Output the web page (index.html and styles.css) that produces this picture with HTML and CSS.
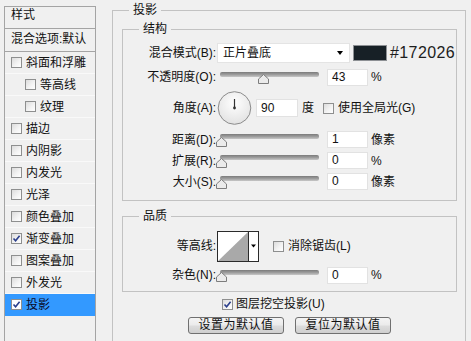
FILE: index.html
```html
<!DOCTYPE html>
<html lang="zh">
<head>
<meta charset="utf-8">
<title>图层样式 - 投影</title>
<link rel="stylesheet" href="styles.css">
</head>
<body>
<div class="dialog">
  <aside class="style-list">
    <div class="list-head">样式</div>
    <div class="list-head second">混合选项:默认</div>
    <div class="item"><span class="cb"></span>斜面和浮雕</div>
    <div class="item sub"><span class="cb"></span>等高线</div>
    <div class="item sub"><span class="cb"></span>纹理</div>
    <div class="item"><span class="cb"></span>描边</div>
    <div class="item"><span class="cb"></span>内阴影</div>
    <div class="item"><span class="cb"></span>内发光</div>
    <div class="item"><span class="cb"></span>光泽</div>
    <div class="item"><span class="cb"></span>颜色叠加</div>
    <div class="item"><span class="cb"><svg width="9" height="9" viewBox="0 0 9 9"><path d="M1.5 4.5 L3.6 6.8 L7.6 1.8" fill="none" stroke="#2b3f8c" stroke-width="1.6"/></svg></span>渐变叠加</div>
    <div class="item"><span class="cb"></span>图案叠加</div>
    <div class="item"><span class="cb"></span>外发光</div>
    <div class="item active"><span class="cb"><svg width="9" height="9" viewBox="0 0 9 9"><path d="M1.5 4.5 L3.6 6.8 L7.6 1.8" fill="none" stroke="#2b3f8c" stroke-width="1.6"/></svg></span>投影</div>
  </aside>

  <fieldset class="group outer">
    <legend>投影</legend>

    <fieldset class="group structure">
      <legend>结构</legend>
      <div class="rows">
        <div class="row">
          <span class="lbl">混合模式(B):</span>
          <div class="select"><span>正片叠底</span><span class="caret"></span></div>
          <span class="swatch"></span>
          <span class="hex">#172026</span>
        </div>
        <div class="row">
          <span class="lbl">不透明度(O):</span>
          <div class="slider"><div class="track"></div><svg class="thumb" style="left:42px" width="11" height="10" viewBox="0 0 11 10"><polygon points="5.5,0.5 10.5,5 10.5,9.5 0.5,9.5 0.5,5" fill="#ebebeb" stroke="#7d7d7d"/></svg></div>
          <span class="field">43</span>
          <span class="unit">%</span>
        </div>
        <div class="row tall">
          <span class="lbl">角度(A):</span>
          <svg class="dial" width="35" height="34" viewBox="0 0 35 34">
            <defs><radialGradient id="dg" cx="50%" cy="35%" r="65%"><stop offset="0" stop-color="#ffffff"/><stop offset="1" stop-color="#e2e2e2"/></radialGradient></defs>
            <circle cx="17.5" cy="17" r="16.3" fill="url(#dg)" stroke="#8c8c8c"/>
            <line x1="17.5" y1="17" x2="17.5" y2="8" stroke="#333" stroke-width="1.2"/>
            <circle cx="17.5" cy="17" r="1.4" fill="#333"/>
          </svg>
          <span class="field wide">90</span>
          <span class="unit deg">度</span>
          <span class="cb gap-cb"></span>
          <span class="cb-text">使用全局光(G)</span>
        </div>
        <div class="stack">
          <div class="row slim">
            <span class="lbl">距离(D):</span>
            <div class="slider"><div class="track"></div><svg class="thumb" style="left:0px" width="11" height="10" viewBox="0 0 11 10"><polygon points="5.5,0.5 10.5,5 10.5,9.5 0.5,9.5 0.5,5" fill="#ebebeb" stroke="#7d7d7d"/></svg></div>
            <span class="field">1</span>
            <span class="unit">像素</span>
          </div>
          <div class="row slim">
            <span class="lbl">扩展(R):</span>
            <div class="slider"><div class="track"></div><svg class="thumb" style="left:0px" width="11" height="10" viewBox="0 0 11 10"><polygon points="5.5,0.5 10.5,5 10.5,9.5 0.5,9.5 0.5,5" fill="#ebebeb" stroke="#7d7d7d"/></svg></div>
            <span class="field">0</span>
            <span class="unit">%</span>
          </div>
          <div class="row slim">
            <span class="lbl">大小(S):</span>
            <div class="slider"><div class="track"></div><svg class="thumb" style="left:0px" width="11" height="10" viewBox="0 0 11 10"><polygon points="5.5,0.5 10.5,5 10.5,9.5 0.5,9.5 0.5,5" fill="#ebebeb" stroke="#7d7d7d"/></svg></div>
            <span class="field">0</span>
            <span class="unit">像素</span>
          </div>
        </div>
      </div>
    </fieldset>

    <fieldset class="group quality">
      <legend>品质</legend>
      <div class="rows">
        <div class="row contour-row">
          <span class="lbl">等高线:</span>
          <svg class="contour" width="42" height="31" viewBox="0 0 42 31">
            <rect x="0.5" y="0.5" width="41" height="30" fill="#fff" stroke="#2a2a2a"/>
            <polygon points="1,30 31,1 31,30" fill="#a9a9a9"/>
            <line x1="31.5" y1="0.5" x2="31.5" y2="30.5" stroke="#2a2a2a"/>
            <polygon points="34,13.5 39,13.5 36.5,16.5" fill="#000"/>
          </svg>
          <span class="cb aa-cb"></span>
          <span class="cb-text">消除锯齿(L)</span>
        </div>
        <div class="row">
          <span class="lbl">杂色(N):</span>
          <div class="slider"><div class="track"></div><svg class="thumb" style="left:0px" width="11" height="10" viewBox="0 0 11 10"><polygon points="5.5,0.5 10.5,5 10.5,9.5 0.5,9.5 0.5,5" fill="#ebebeb" stroke="#7d7d7d"/></svg></div>
          <span class="field">0</span>
          <span class="unit">%</span>
        </div>
      </div>
    </fieldset>

    <div class="knockout">
      <span class="cb"><svg width="9" height="9" viewBox="0 0 9 9"><path d="M1.5 4.5 L3.6 6.8 L7.6 1.8" fill="none" stroke="#2b3f8c" stroke-width="1.6"/></svg></span>
      <span class="cb-text">图层挖空投影(U)</span>
    </div>

    <div class="buttons">
      <button class="btn">设置为默认值</button>
      <button class="btn">复位为默认值</button>
    </div>
  </fieldset>
</div>
</body>
</html>
```

FILE: styles.css
```css
* { box-sizing: border-box; }

html, body {
  margin: 0;
  padding: 0;
}

body {
  width: 471px;
  height: 341px;
  overflow: hidden;
  background: #f0f0f0;
  color: #111;
  font-family: "Liberation Sans", "Noto Sans CJK SC", sans-serif;
  font-size: 12px;
  line-height: 16px;
}

.dialog {
  display: flex;
  align-items: flex-start;
  height: 341px;
  overflow: hidden;
}

/* ---------- left style list ---------- */
.style-list {
  flex: none;
  margin: 6px 0 0 4px;
  width: 92px;
  height: 336px;
  border: 1px solid #a4a4a4;
  background: #f0f0f0;
}

.list-head {
  height: 22px;
  padding: 0 0 0 6px;
  line-height: 16px;
  border-bottom: 1px solid #a4a4a4;
}

.list-head.second {
  height: 23px;
  padding-top: 2px;
}

.item {
  height: 22px;
  display: flex;
  align-items: center;
  gap: 4px;
  padding-left: 6px;
  border-bottom: 1px solid #f9f9f9;
}

.item.sub { padding-left: 20px; }

.item.active {
  background: #3399ff;
  border-bottom-color: #3399ff;
  color: #0a0a2a;
}

/* ---------- checkbox ---------- */
.cb {
  flex: none;
  width: 11px;
  height: 11px;
  border: 1px solid #8e8f8f;
  background: linear-gradient(135deg, #dcdcdc 0%, #f4f4f4 60%, #ffffff 100%);
  display: flex;
  align-items: center;
  justify-content: center;
}

.item.active .cb { background: #fff; }

.cb-text { margin-left: 4px; white-space: nowrap; }

/* ---------- group boxes ---------- */
.group {
  margin: 0;
  padding: 0;
  min-width: 0;
  border: 1px solid #c2c2c2;
}

.group > legend {
  padding: 0 4px;
  margin-left: 16px;
  line-height: 16px;
}

.outer {
  flex: none;
  margin: 2px 0 0 16px;
  width: 354px;
  height: 341px;
  padding: 0 8px 0 9px;
}

.outer > legend { margin-left: 7px; }

.structure {
  margin-top: 3px;
  padding: 6px 0 8px;
}

.quality {
  margin-top: 7px;
  padding: 7px 0 6px;
}

.rows {
  display: flex;
  flex-direction: column;
  gap: 4px;
}

.row {
  display: flex;
  align-items: center;
  height: 20px;
  white-space: nowrap;
}

.row.tall { height: 34px; }
.row.slim { height: 21px; }
.row.contour-row { height: 30px; }

.stack {
  display: flex;
  flex-direction: column;
}

.lbl {
  flex: none;
  width: 93px;
  text-align: right;
}

/* ---------- blend select ---------- */
.select {
  flex: none;
  margin-left: 1px;
  width: 133px;
  height: 20px;
  background: #fff;
  border: 1px solid #e4e4e4;
  padding: 0 6px 0 5px;
  display: flex;
  align-items: center;
  justify-content: space-between;
}

.caret {
  width: 0;
  height: 0;
  border-left: 3.5px solid transparent;
  border-right: 3.5px solid transparent;
  border-top: 4px solid #000;
}

.swatch {
  flex: none;
  margin-left: 3px;
  width: 34px;
  height: 16px;
  background: #172026;
  border: 1px solid #8d9094;
}

.hex {
  margin-left: 3px;
  font-size: 16px;
  letter-spacing: 0.4px;
  color: #1d1d1d;
}

/* ---------- sliders ---------- */
.slider {
  flex: none;
  position: relative;
  align-self: stretch;
  width: 103px;
  padding-left: 4px;
}

.track {
  margin-top: 5px;
  height: 5px;
  border-radius: 2px;
  background: linear-gradient(#7b7b7b, #9c9c9c 50%, #c7c7c7);
}

.thumb {
  position: absolute;
  top: 7px;
}

.row.slim .thumb { top: 8px; }

/* ---------- number fields ---------- */
.field {
  flex: none;
  margin-left: 8px;
  width: 41px;
  height: 17px;
  background: #fff;
  border: 1px solid #e2e2e2;
  padding-left: 4px;
  line-height: 15px;
}

.field.wide {
  margin-left: 4px;
  width: 42px;
  height: 18px;
  line-height: 16px;
}

.unit { margin-left: 3px; }
.unit.deg { margin-left: 4px; }

.dial {
  flex: none;
  margin-left: 1px;
}

.gap-cb { margin-left: 9px; }

/* ---------- quality ---------- */
.contour {
  flex: none;
  margin-left: 1px;
}

.aa-cb { margin-left: 14px; }

/* ---------- footer ---------- */
.knockout {
  margin-top: 5px;
  height: 14px;
  padding-left: 100px;
  display: flex;
  align-items: center;
}

.knockout .cb-text { margin-left: 3px; }

.buttons {
  margin-top: 6px;
  display: flex;
  justify-content: center;
  gap: 11px;
}

.btn {
  width: 96px;
  height: 17px;
  padding: 0;
  border: 1px solid #707070;
  border-radius: 3px;
  background: linear-gradient(#f4f4f4 0%, #ebebeb 48%, #dddddd 52%, #cfcfcf 100%);
  font-family: "Liberation Sans", "Noto Sans CJK SC", sans-serif;
  font-size: 12px;
  line-height: 15px;
  color: #111;
  letter-spacing: 0.5px;
}
```
